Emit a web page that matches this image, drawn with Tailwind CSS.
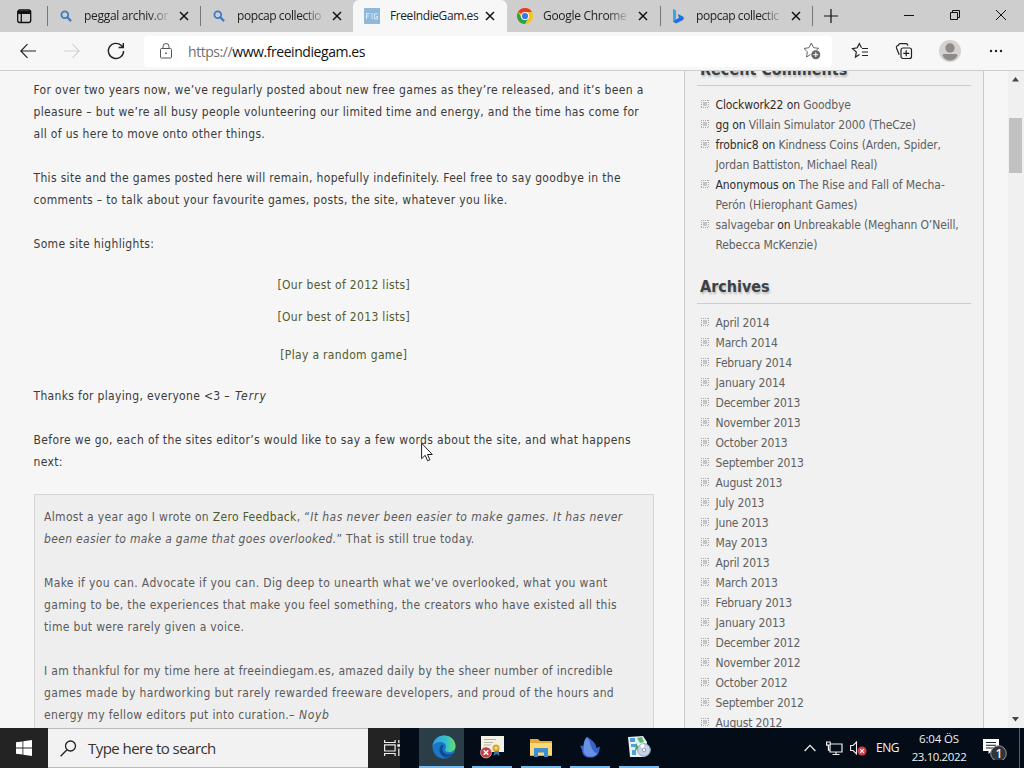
<!DOCTYPE html>
<html lang="en">
<head>
  <meta charset="UTF-8">
  <meta name="viewport" content="width=device-width, initial-scale=1">
  <title>FreeIndieGam.es</title>
  <script src="https://cdn.jsdelivr.net/npm/@tailwindcss/browser@4"></script>
</head>
<body class="w-[1024px] h-[768px] overflow-hidden flex flex-col bg-[#f7f7f7] font-['Open_Sans',sans-serif]">

  <!-- Tab strip -->
  <header class="h-8 shrink-0 bg-[#cecece] flex text-[12px] tracking-[-0.42px] text-[#222]">
    <div class="w-[47px] flex items-center justify-center">
      <svg class="w-4 h-4" viewBox="0 0 16 16" fill="none" stroke="#111" stroke-width="1.3"><rect x="1.7" y="2" width="13" height="12.5" rx="2"/><path d="M2 3.8h12.5M2 5h12.5" stroke-width="2"/><path d="M5.3 5v9.5"/></svg>
    </div>
    <div class="w-[153px] flex items-center relative">
      <i class="absolute left-0 top-[6px] h-5 w-px bg-[#777]"></i>
      <svg class="ml-[13px] w-3 h-3 shrink-0" viewBox="0 0 12 12" fill="none" stroke="#3b7cc4" stroke-width="1.8"><circle cx="4.8" cy="4.8" r="3.4"/><path d="M7.3 7.3l3.8 3.8" stroke-width="2.2"/></svg>
      <span class="ml-3 w-[87px] whitespace-nowrap tracking-[-0.3px] mask-r-from-75%">peggal archiv.or</span>
      <svg class="ml-[8px] w-[10px] h-[10px] shrink-0" viewBox="0 0 10 10" stroke="#111" stroke-width="1.5"><path d="M1 1l8 8M9 1l-8 8"/></svg>
    </div>
    <div class="w-[153px] flex items-center relative">
      <i class="absolute left-0 top-[6px] h-5 w-px bg-[#777]"></i>
      <svg class="ml-[13px] w-3 h-3 shrink-0" viewBox="0 0 12 12" fill="none" stroke="#3b7cc4" stroke-width="1.8"><circle cx="4.8" cy="4.8" r="3.4"/><path d="M7.3 7.3l3.8 3.8" stroke-width="2.2"/></svg>
      <span class="ml-3 w-[89px] whitespace-nowrap mask-r-from-75%">popcap collectio</span>
      <svg class="ml-[6px] w-[10px] h-[10px] shrink-0" viewBox="0 0 10 10" stroke="#111" stroke-width="1.5"><path d="M1 1l8 8M9 1l-8 8"/></svg>
    </div>
    <div class="w-[154px] flex items-center bg-[#f7f7f7] rounded-t-md">
      <svg class="ml-[11px] w-4 h-4 shrink-0" viewBox="0 0 16 16"><rect width="16" height="16" fill="#8db9dc"/><path d="M2.500 11V5.500H5.500M2.500 8H5M8 5v6M13.500 5.800h-3v5h3V8.500h-1.500" fill="none" stroke="#dcebf7"/></svg>
      <span class="ml-[10px] w-[90px] whitespace-nowrap">FreeIndieGam.es</span>
      <svg class="ml-[5px] w-[10px] h-[10px] shrink-0" viewBox="0 0 10 10" stroke="#111" stroke-width="1.5"><path d="M1 1l8 8M9 1l-8 8"/></svg>
    </div>
    <div class="w-[153px] flex items-center">
      <svg class="ml-[10px] w-4 h-4 shrink-0" viewBox="0 0 16 16"><circle cx="8" cy="8" r="8" fill="#fbc116"/><path d="M8 8L1.070 4A8 8 0 0 1 14.930 4H8z" fill="#e33b2e"/><path d="M1.070 4A8 8 0 0 0 8 16l3.460-6L8 8 4.540 10z" fill="#2ba24c"/><circle cx="8" cy="8" r="4" fill="#fff"/><circle cx="8" cy="8" r="3.100" fill="#2f79e8"/></svg>
      <span class="ml-[10px] w-[87px] whitespace-nowrap tracking-[-0.3px] mask-r-from-75%">Google Chrome</span>
      <svg class="ml-[8px] w-[10px] h-[10px] shrink-0" viewBox="0 0 10 10" stroke="#111" stroke-width="1.5"><path d="M1 1l8 8M9 1l-8 8"/></svg>
    </div>
    <div class="w-[153px] flex items-center relative">
      <i class="absolute left-0 top-[6px] h-5 w-px bg-[#777]"></i>
      <svg class="ml-[12px] w-3 h-4 shrink-0" viewBox="0 0 12 16"><path d="M1 1l3 1.200v9.300L1 13.500z" fill="#35a7ee"/><path d="M4 11.500l3-1.700-1.300-3.800 5.300 2.400c1 .7 1 2.700 0 3.600L4 15.500l-3-2z" fill="#1f6fe0"/></svg>
      <span class="ml-3 w-[88px] whitespace-nowrap mask-r-from-75%">popcap collectic</span>
      <svg class="ml-[7px] w-[10px] h-[10px] shrink-0" viewBox="0 0 10 10" stroke="#111" stroke-width="1.5"><path d="M1 1l8 8M9 1l-8 8"/></svg>
    </div>
    <div class="flex-1 flex items-center relative">
      <i class="absolute -left-px top-[6px] h-5 w-px bg-[#777]"></i>
      <svg class="ml-[11px] w-[14px] h-[14px]" viewBox="0 0 14 14" stroke="#111" stroke-width="1.200"><path d="M7 0v14M0 7h14"/></svg>
      <svg class="ml-[66px] mb-[3px] w-[10px] h-[10px]" viewBox="0 0 10 10" stroke="#111"><path d="M0 5.500h10"/></svg>
      <svg class="ml-[36px] mb-[3px] w-[10px] h-[10px]" viewBox="0 0 10 10" stroke="#111" fill="none"><path d="M.5 2.500h7v7h-7zM2.500 2.500v-2h7v7h-2"/></svg>
      <svg class="ml-[36px] mb-[3px] w-[10px] h-[10px]" viewBox="0 0 10 10" stroke="#111"><path d="M0 0l10 10M10 0L0 10"/></svg>
    </div>
  </header>

  <!-- Address bar -->
  <nav class="h-[39px] shrink-0 flex items-center border-b border-[#cdcdcd] bg-[#f7f7f7]">
    <svg class="ml-5 w-4 h-4" viewBox="0 0 16 16" fill="none" stroke="#222" stroke-width="1.200"><path d="M16 8H.8M7.500 1.200L.8 8l6.700 6.800"/></svg>
    <svg class="ml-7 w-4 h-4" viewBox="0 0 16 16" fill="none" stroke="#d3d3d3" stroke-width="1.200"><path d="M0 8h15.200M8.500 1.200L15.200 8l-6.700 6.800"/></svg>
    <svg class="ml-[27px] w-[18px] h-[18px]" viewBox="0 0 18 18" fill="none" stroke="#222" stroke-width="1.400"><path d="M16.600 9A7.600 7.600 0 1 1 14.300 3.500L16 5.300M16.300 1v4.500h-4.700"/></svg>
    <div class="ml-[19px] w-[688px] h-[31px] bg-white rounded flex items-center">
      <svg class="ml-4 w-3 h-4" viewBox="0 0 12 16" fill="none" stroke="#555"><rect x=".5" y="5.500" width="11" height="9.500" rx="1"/><path d="M3 5.500V3.500a3 3 0 0 1 6 0v2"/><circle cx="6" cy="10.200" r=".5" fill="#555"/></svg>
      <span class="ml-4 text-[14px] tracking-[-0.44px] text-[#111]"><span class="text-[#707070]">https://</span>www.freeindiegam.es</span>
      <svg class="ml-auto mr-[11px] w-[18px] h-[18px]" viewBox="0 0 18 18" fill="none" stroke="#666"><path d="M7.500 12.500l-4 2.500.9-5.200L1 6.500l5-.8L8.300 1l2.300 4.700 5 .6-2.200 2"/><circle cx="12.800" cy="12.700" r="4.500" fill="#666" stroke="none"/><path d="M12.800 10.200v5M10.300 12.700h5" stroke="#fff"/></svg>
    </div>
    <svg class="ml-[19px] w-[18px] h-[18px]" viewBox="0 0 18 18" fill="none" stroke="#222" stroke-width="1.200"><path d="M8.500 12.500L4.500 15l.8-5L1.500 6.700l4.800-.9L8.300 1.500l2.200 4.300M11 6.500h6M11 10h6M11 13.500h6"/></svg>
    <svg class="ml-[26px] w-[18px] h-[18px]" viewBox="0 0 18 18" fill="none" stroke="#222" stroke-width="1.200"><rect x="6" y="6" width="10.500" height="10.500" rx="2"/><path d="M11.200 8.300v6M8.300 11.300h6M4.200 12.700L1.500 6Q1 4.500 2.200 3.800L3.500 3.300V3q.3-1.300 1.500-1.300h6q1.500 0 2 2"/></svg>
    <svg class="ml-[26px] w-[22px] h-[22px]" viewBox="0 0 22 22"><circle cx="11" cy="11" r="11" fill="#d4d2d0"/><circle cx="11" cy="8" r="4.700" fill="#8d8a87"/><path d="M3.500 15.500q0-1.500 1.500-1.500h12q1.500 0 1.500 1.500-2.500 5-7.500 5t-7.500-5z" fill="#8d8a87"/></svg>
    <svg class="ml-[28px] w-[14px] h-1" viewBox="0 0 14 4" fill="#222"><circle cx="2" cy="2" r="1.200"/><circle cx="7" cy="2" r="1.200"/><circle cx="12" cy="2" r="1.200"/></svg>
  </nav>

  <!-- Page -->
  <div class="h-[657px] shrink-0 flex overflow-hidden text-[12px] font-['DejaVu_Sans_Condensed',sans-serif] bg-[#f6f6f6] text-[#3a3a3a]">
    <main class="w-[684px] pl-[33.500px] pr-[30px] pt-2 leading-[22px] tracking-[0.33px] whitespace-nowrap">
      <p>For over two years now, we’ve regularly posted about new free games as they’re released, and it’s been a<br>pleasure – but we’re all busy people volunteering our limited time and energy, and the time has come for<br>all of us here to move onto other things.</p>
      <p class="mt-[22px]">This site and the games posted here will remain, hopefully indefinitely. Feel free to say goodbye in the<br>comments – to talk about your favourite games, posts, the site, whatever you like.</p>
      <p class="mt-[22px]">Some site highlights:</p>
      <div class="mt-[19px] text-center text-[#4f5b2c]">
        <p>[Our best of 2012 lists]</p>
        <p class="mt-[10px]">[Our best of 2013 lists]</p>
        <p class="mt-4">[Play a random game]</p>
      </div>
      <p class="mt-[19px]">Thanks for playing, everyone &lt;3 <em class="tracking-[0.95px]">– Terry</em></p>
      <p class="mt-[22px] tracking-[0.37px]">Before we go, each of the sites editor’s would like to say a few words about the site, and what happens<br>next:</p>
      <blockquote class="mt-[21px] w-[620px] h-[260px] border border-[#d5d5d5] bg-[#eee] pl-[9.500px] pt-[11px] text-[#5a5a5a]">
        <p>Almost a year ago I wrote on <span class="text-[#4f5b2c]">Zero Feedback</span>, “<em><span class="tracking-[0.44px]">It has never been easier to make games. It has never</span><br>been easier to make a game that goes overlooked.</em>” That is still true today.</p>
        <p class="mt-[22px]"><span class="tracking-[0.37px]">Make if you can. Advocate if you can. Dig deep to unearth what we’ve overlooked, what you want</span><br>gaming to be, the experiences that make you feel something, the creators who have existed all this<br>time but were rarely given a voice.</p>
        <p class="mt-[22px]">I am thankful for my time here at freeindiegam.es, amazed daily by the sheer number of incredible<br><span class="tracking-[0.36px]">games made by hardworking but rarely rewarded freeware developers, and proud of the hours and</span><br>energy my fellow editors put into curation.<em class="tracking-[0.6px]">– Noyb</em></p>
      </blockquote>
    </main>

    <aside class="w-[300px] border-x border-[#cacaca] bg-[#f1f1f1] pl-3 pr-3 leading-5 tracking-[-0.12px] whitespace-nowrap text-[#606060]">
      <h2 class="-mt-3 h-[27px] pl-[3px] text-[16px] leading-[22px] font-bold tracking-normal text-[#3a4245] border-b border-[#ccc] text-shadow-[1px_2px_2px_#bbb]">Recent Comments</h2>
      <ul class="pl-[18.500px] mt-[9px]">
        <li><span class="text-[#2c2c2c]">Clockwork22 on</span> Goodbye</li>
        <li><span class="text-[#2c2c2c]">gg on</span> Villain Simulator 2000 (TheCze)</li>
        <li><span class="text-[#2c2c2c]">frobnic8 on</span> Kindness Coins (Arden, Spider,<br>Jordan Battiston, Michael Real)</li>
        <li class="tracking-[-0.06px]"><span class="text-[#2c2c2c]">Anonymous on</span> The Rise and Fall of Mecha-<br>Perón (Hierophant Games)</li>
        <li>salvagebar <span class="text-[#2c2c2c]">on</span> Unbreakable (Meghann O’Neill,<br>Rebecca McKenzie)</li>
      </ul>
      <h2 class="mt-[21px] h-[28px] pl-[3px] text-[16px] leading-[22px] font-bold tracking-normal text-[#3a4245] border-b border-[#ccc] text-shadow-[1px_2px_2px_#bbb]">Archives</h2>
      <ul id="archives" class="pl-[18.500px] mt-[9px] tracking-[-0.17px]"></ul>
    </aside>

    <div class="w-6"></div>
    <div class="w-4 bg-[#f0f0f0] flex flex-col items-center">
      <svg class="mt-[6px] mr-0.5 w-[7px] h-[5px]" viewBox="0 0 7 5" fill="#444"><path d="M3.500 0L7 4.500H0z"/></svg>
      <div class="mt-9 mr-px w-[13px] h-[55px] bg-[#c1c1c1]"></div>
      <svg class="mt-auto mr-0.5 mb-[6px] w-[7px] h-[5px]" viewBox="0 0 7 5" fill="#444"><path d="M3.500 4.500L7 0H0z"/></svg>
    </div>
  </div>

  <!-- Taskbar -->
  <footer class="h-10 shrink-0 bg-[#030c17] flex text-[#f2f2f2]">
    <div class="w-12 bg-[#232323] flex items-center justify-center">
      <svg class="w-4 h-4" viewBox="0 0 16 16" fill="#fff"><path d="M0 2.300L6.500 1.400v6.200H0zM7.300 1.300L16 0v7.600H7.300zM0 8.400h6.500v6.200L0 13.700zM7.300 8.400H16V16l-8.700-1.200z"/></svg>
    </div>
    <div class="w-80 bg-[#f2f2f2] border-y border-[#bbb] flex items-center text-[#333]">
      <svg class="ml-3 w-[17px] h-[17px]" viewBox="0 0 17 17" fill="none" stroke="#222" stroke-width="1.300"><circle cx="10.500" cy="6" r="5"/><path d="M7 9.700L.6 16.200"/></svg>
      <span class="ml-[11px] text-[15px] tracking-[-0.54px]">Type here to search</span>
    </div>
    <div class="w-8 bg-[#232323] flex items-center justify-end">
      <svg class="w-4 h-4" viewBox="0 0 16 16" fill="none" stroke="#eee" stroke-width="1.200"><path d="M.6 0v2.500h10.500V0M.6 16v-2.500h10.500V16M.6 4.800h10.500v6.200H.6zM14.800 0v3M14.800 8.500V16"/><path d="M13.300 5.500H16" stroke-width="2.500"/></svg>
    </div>
    <div class="ml-[19px] flex gap-[4px]">
      <div class="w-[45px] bg-[#2b3d47] border-b-2 border-[#76b9ed] flex items-center justify-center">
        <svg class="ml-1 w-6 h-6" viewBox="0 0 24 24">
          <defs><linearGradient id="g1"><stop offset="0" stop-color="#2f9fe0"/><stop offset=".6" stop-color="#35c1c9"/><stop offset="1" stop-color="#69dd62"/></linearGradient></defs>
          <circle cx="12" cy="12" r="11.500" fill="#1a76c9"/>
          <path d="M.6 11C1.500 4.500 6.500.5 12 .5c7 0 11.500 5 11.500 10.500 0 4-3 6-6.500 6-2.500 0-4-1-4-2 0-.8 1-1.200 1-3.300C14 9 11.500 7 8.500 7 5 7 2 8.500.6 11z" fill="url(#g1)"/>
          <path d="M9.500 10C6 13 7 20 13 22.500 17 23 20.500 20.500 22 18c-5 2.500-11 1-11.500-3-.3-2 .3-3.500 1.500-4.500-.8-.6-1.700-.8-2.500-.5z" fill="#124c8c"/>
        </svg>
      </div>
      <div class="ml-1 w-10 border-b-2 border-[#76b9ed] flex items-center justify-center">
        <svg class="w-6 h-6" viewBox="0 0 24 24"><path d="M1 1h23v16H1z" fill="#f3f0e6"/><path d="M4 4.500h12M4 7.500h9M4 10h7" stroke="#b5b09e"/><path d="M15 14l-1.500 7 3-2 3 2-1-7z" fill="#3b74b9"/><circle cx="16" cy="13" r="3.600" fill="#d9a52b"/><circle cx="16" cy="13" r="1.500" fill="#f6e08c"/><circle cx="6" cy="17.500" r="5.500" fill="#c23b42" stroke="#e9c4c4" stroke-width=".7"/><path d="M3.700 15.200l4.600 4.600M8.300 15.200l-4.600 4.600" stroke="#fff" stroke-width="1.600"/></svg>
      </div>
      <div class="ml-[5px] w-10 border-b-2 border-[#76b9ed] flex items-center justify-center">
        <svg class="w-6 h-6" viewBox="0 0 24 24"><path d="M1 4h8l2 2h12v15H1z" fill="#e5a83a"/><path d="M1 8h22v12H1z" fill="#fbd775"/><path d="M5 13h14v9h-4v-4.500H9V22H5z" fill="#3e8fd0"/></svg>
      </div>
      <div class="ml-[5px] w-10 border-b-2 border-[#76b9ed] flex items-center justify-center">
        <svg class="w-6 h-6" viewBox="0 0 24 24"><path d="M9 2c6 3 9 7 9.500 11l3.500-1.500c-1 2.500 0 5-2 7.500-2 3-6 4-9.500 3.500-4-.5-6.500-3.500-6.500-7.500L2 10.500l3.500.5C5.500 7 6.500 4 9 2z" fill="#3564c8"/><path d="M9 2c3.500 4 3 8 5 11.500s3 4.500 5.500 5c-2 2.500-5 3.500-9 3-3.500-1-5-4-5-7.500C5.500 9 6.500 5 9 2z" fill="#6a92e4"/></svg>
      </div>
      <div class="ml-[5px] w-10 border-b-2 border-[#76b9ed] flex items-center justify-center">
        <svg class="w-6 h-6" viewBox="0 0 24 24"><path d="M1 2l15-1 4 6-2 15H3z" fill="#e3f0f8"/><path d="M3 3h5v4H3z" fill="#4b9ce0"/><path d="M10 3l5-1 2 5-4 1z" fill="#5fb56a"/><path d="M4 9h5v3H4zM5 15h4v5H5z" fill="#5aa1cf"/><path d="M9 8l3 5-4 3z" fill="#47a75a"/><circle cx="17" cy="15" r="6.300" fill="#c7d4e6" stroke="#8fa3bf"/><path d="M17 15l-4-4.500A6 6 0 0 1 17 9z" fill="#fff"/><circle cx="17" cy="15" r="1.800" fill="#f7f9fc" stroke="#8093b0" stroke-width=".8"/></svg>
      </div>
    </div>
    <div class="ml-auto flex items-center text-[12px]">
      <svg class="w-3 h-2" viewBox="0 0 12 8" fill="none" stroke="#eee" stroke-width="1.300"><path d="M.6 7L6 1.400 11.400 7"/></svg>
      <svg class="ml-[10px] w-[17px] h-[15px]" viewBox="0 0 17 15" fill="none" stroke="#eee" stroke-width="1.200"><path d="M4 3h12v8H4V5M10 11v2.500M6.500 13.500h7M.6 1h3.600v3.200H.6zM2.400 4.200v5H4"/></svg>
      <svg class="ml-[7px] w-[17px] h-[15px]" viewBox="0 0 17 15" fill="none" stroke="#eee" stroke-width="1.100"><path d="M.6 4.500h2.500L6.500 1v12L3.100 9.500H.6z"/><circle cx="12" cy="10" r="4.500" fill="#d93e48" stroke="none"/><path d="M10.200 8.200l3.600 3.600M13.800 8.200l-3.600 3.600" stroke="#fff"/></svg>
      <span class="ml-[9px] w-[23px] tracking-[-0.5px]">ENG</span>
      <div class="ml-[12px] w-[56px] text-center leading-[18px] whitespace-nowrap text-[11.5px] tracking-[-0.4px] pb-px"><span class="tracking-[-0.15px]">6:04 ÖS</span><br>23.10.2022</div>
      <div class="ml-[16px] w-[25px] h-6 relative">
        <svg class="w-[25px] h-6" viewBox="0 0 25 24"><path d="M0 3h16v12H8.500L5.500 18v-3H0z" fill="#fff"/><path d="M3 6.500h10M3 9.200h10M3 12h7" stroke="#1b222d" stroke-width="1.100"/><circle cx="15.500" cy="17.500" r="7.800" fill="#30343b" stroke="#9a9da1"/></svg>
        <span class="absolute left-[12.500px] top-[9px] text-[12px] leading-[17px] font-semibold">1</span>
      </div>
      <div class="ml-[11px] w-px h-10 bg-[#596069]"></div>
      <div class="w-1"></div>
    </div>
  </footer>

  <!-- Mouse pointer -->
  <svg class="absolute left-[421px] top-[442px] w-3 h-[20px]" viewBox="0 0 12 20" fill="#fff" stroke="#222"><path d="M.6 1.200v15.500l3.600-3.400 2.400 5.500 2.300-1-2.400-5.300h4.800z"/></svg>

  <script>
    const months = [
      'April 2014', 'March 2014', 'February 2014', 'January 2014', 'December 2013', 'November 2013', 'October 2013',
      'September 2013', 'August 2013', 'July 2013', 'June 2013', 'May 2013', 'April 2013', 'March 2013',
      'February 2013', 'January 2013', 'December 2012', 'November 2012', 'October 2012', 'September 2012', 'August 2012'
    ];
    document.getElementById('archives').innerHTML = months.map(m => `<li>${m}</li>`).join('');

    // dotted square bullet in front of each sidebar item
    const bullet = `<svg class="absolute -left-[14.5px] top-[5px] w-2 h-2" viewBox="0 0 8 8" fill="none"><path d="M0 .5h8M0 7.500h8M.5 0v8M7.500 0v8" stroke="#a8a8a8" stroke-dasharray="1 1"/><path d="M2 2h4v4H2z" fill="#c4c4c4"/></svg>`;
    document.querySelectorAll('aside li').forEach(li => {
      li.classList.add('relative');
      li.insertAdjacentHTML('afterbegin', bullet);
    });
  </script>
</body>
</html>
